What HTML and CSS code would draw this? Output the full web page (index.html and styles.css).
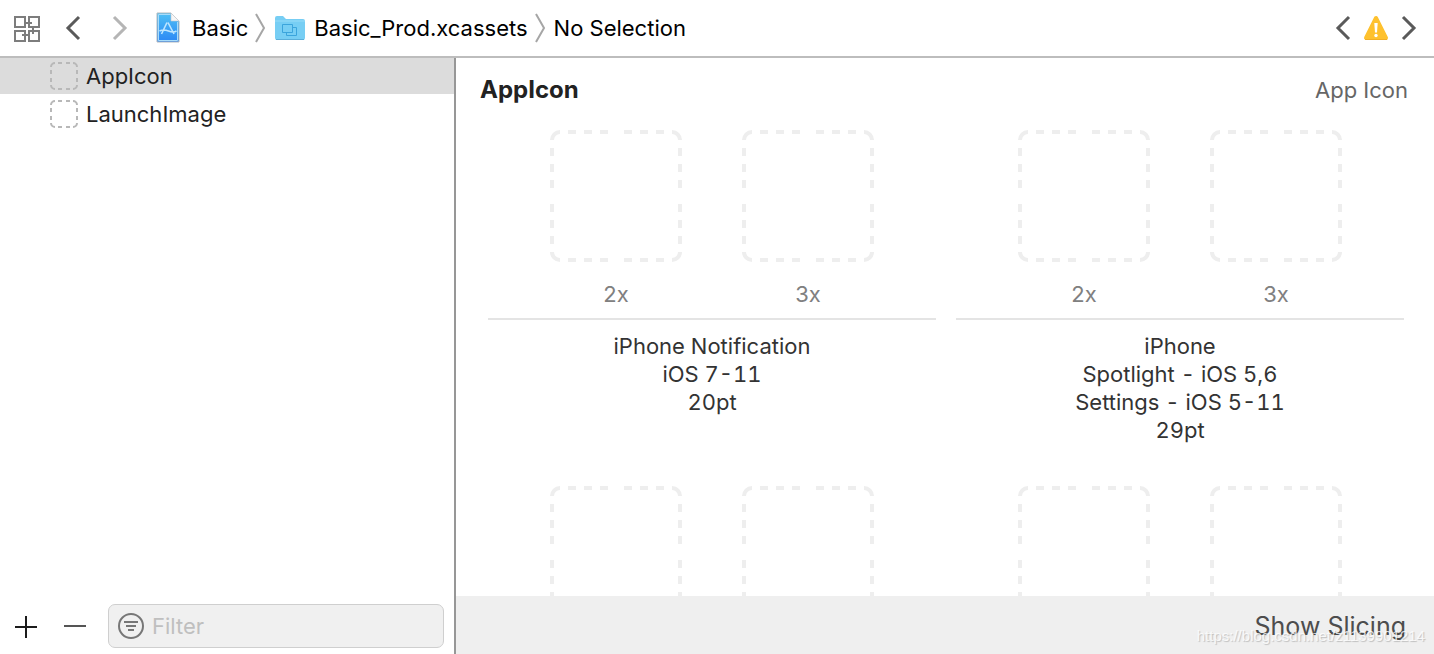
FILE: index.html
```html
<!DOCTYPE html>
<html lang="en">
<head>
<meta charset="utf-8">
<title>Basic_Prod.xcassets</title>
<link rel="stylesheet" href="styles.css">
</head>
<body>
<svg class="defs" aria-hidden="true">
  <symbol id="slot" viewBox="0 0 132 132">
    <g fill="none" stroke="currentColor" stroke-width="4">
      <path d="M10 2a8 8 0 0 0-8 8M122 2a8 8 0 0 1 8 8M10 130a8 8 0 0 1-8-8M122 130a8 8 0 0 0 8-8"/>
      <path d="M18 2h8m8 0h8m8 0h8m16 0h8m8 0h8m8 0h8M18 130h8m8 0h8m8 0h8m16 0h8m8 0h8m8 0h8"/>
      <path d="M2 18v8m0 8v8m0 8v8m0 16v8m0 8v8m0 8v8M130 18v8m0 8v8m0 8v8m0 16v8m0 8v8m0 8v8"/>
    </g>
  </symbol>
  <symbol id="mini" viewBox="0 0 28 28">
    <path fill="none" stroke="currentColor" stroke-width="2" d="M5 1a4 4 0 0 0-4 4M23 1a4 4 0 0 1 4 4M5 27a4 4 0 0 1-4-4M23 27a4 4 0 0 0 4-4M8 1h4m4 0h4M8 27h4m4 0h4M1 8v4m0 4v4M27 8v4m0 4v4"/>
  </symbol>
  <symbol id="sep" viewBox="0 0 12 30"><path fill="none" stroke="#a6a6a6" stroke-width="2" d="M1 1l8 14-8 14"/></symbol>
</svg>

<header class="jumpbar">
  <button class="icon-button related" aria-label="Related items">
    <svg width="28" height="28" viewBox="0 0 28 28" fill="none" stroke="#7d7d7d" stroke-width="2"><path d="M2 3h10v10H2zM16 3h10v10H16zM2 17h10v10H2zM16 17h10v10H16zM12 9h7M20 13v7M9 21h7"/></svg>
  </button>
  <button class="icon-button back" aria-label="Back">
    <svg width="16" height="26" viewBox="0 0 16 26" fill="none" stroke="#5a5a5a" stroke-width="3"><path d="M14 2L3 13l11 11"/></svg>
  </button>
  <button class="icon-button forward" aria-label="Forward">
    <svg width="16" height="26" viewBox="0 0 16 26" fill="none" stroke="#b5b5b5" stroke-width="3"><path d="M2 2l11 11L2 24"/></svg>
  </button>
  <nav class="path" aria-label="Path">
    <a class="crumb" href="#">
      <svg width="29" height="32" viewBox="0 0 29 32">
        <defs><linearGradient id="doc" x1="0" y1="0" x2="0" y2="1"><stop offset="0" stop-color="#4fc0f5"/><stop offset="1" stop-color="#2b87f5"/></linearGradient></defs>
        <path d="M2 1h14l8 8v21H2z" fill="url(#doc)" stroke="#b4b9bd"/>
        <path d="M15.500 2.500h-12v26h19V10" fill="none" stroke="#a7dcfa"/>
        <path d="M16 1v8h8z" fill="#f6f6f6" stroke="#c2c8cc" stroke-width=".6"/>
        <path d="M12 10.500L6.500 22M13 10.500l6 11.500M4.500 19q4-2 9 0t8 0" fill="none" stroke="#bfe6ff" stroke-width="1.600"/>
      </svg>
      <span>Basic</span>
    </a>
    <svg class="sep" width="12" height="30"><use href="#sep"/></svg>
    <a class="crumb" href="#">
      <svg width="32" height="28" viewBox="0 0 32 28">
        <path d="M1 4q0-2 2-2h6l3 3h17q2 0 2 2v17q0 2-2 2H3q-2 0-2-2z" fill="#77cef4"/>
        <path d="M1 7h30" stroke="#98dcf8"/><path d="M2 25.500h28" stroke="#5aaeda"/>
        <path d="M8.500 10.500h10v8h-10zM18.500 13.500h4v8h-10v-3" fill="none" stroke="#3ba4dc"/>
      </svg>
      <span>Basic_Prod.xcassets</span>
    </a>
    <svg class="sep" width="12" height="30"><use href="#sep"/></svg>
    <a class="crumb" href="#"><span>No Selection</span></a>
  </nav>
  <div class="issues">
    <button class="icon-button" aria-label="Previous issue">
      <svg width="16" height="26" viewBox="0 0 16 26" fill="none" stroke="#5a5a5a" stroke-width="3"><path d="M14 2L3 13l11 11"/></svg>
    </button>
    <button class="icon-button" aria-label="Warnings">
      <svg width="26" height="26" viewBox="0 0 26 26"><path d="M13 3L3 23h20z" fill="#fec12e" stroke="#fec12e" stroke-width="4" stroke-linejoin="round"/><path d="M2 24.500h22" stroke="#f2ae25"/><path d="M11.300 8h3.400l-.7 9.500h-2z" fill="#fff"/><circle cx="13" cy="20.500" r="1.700" fill="#fff"/></svg>
    </button>
    <button class="icon-button" aria-label="Next issue">
      <svg width="16" height="26" viewBox="0 0 16 26" fill="none" stroke="#5a5a5a" stroke-width="3"><path d="M2 2l11 11L2 24"/></svg>
    </button>
  </div>
</header>

<div class="workspace">
  <aside class="sidebar">
    <ul class="assets">
      <li><button class="asset selected"><svg width="28" height="28"><use href="#mini"/></svg>AppIcon</button></li>
      <li><button class="asset"><svg width="28" height="28"><use href="#mini"/></svg>LaunchImage</button></li>
    </ul>
    <div class="tools">
      <button class="icon-button" aria-label="Add"><svg width="22" height="24" viewBox="0 0 22 24" stroke="#1c1c1c" stroke-width="2"><path d="M0 13h22M11 2v22"/></svg></button>
      <button class="icon-button" aria-label="Remove"><svg width="22" height="24" viewBox="0 0 22 24" stroke="#555" stroke-width="2"><path d="M0 12h22"/></svg></button>
      <label class="filter">
        <svg width="26" height="26" viewBox="0 0 26 26" fill="none" stroke="#777" stroke-width="2"><circle cx="13" cy="13" r="12"/><path d="M6 9h14M8 13h10M10 17h6"/></svg>
        <input type="text" placeholder="Filter" aria-label="Filter">
      </label>
    </div>
  </aside>

  <main class="editor">
    <div class="canvas">
      <div class="heading"><h1>AppIcon</h1><span class="kind">App Icon</span></div>
      <div class="groups">
        <section class="group">
          <div class="slots">
            <figure><svg width="132" height="132"><use href="#slot"/></svg><figcaption>2x</figcaption></figure>
            <figure><svg width="132" height="132"><use href="#slot"/></svg><figcaption>3x</figcaption></figure>
          </div>
          <p class="caption">iPhone Notification<br>iOS 7-11<br>20pt</p>
        </section>
        <section class="group">
          <div class="slots">
            <figure><svg width="132" height="132"><use href="#slot"/></svg><figcaption>2x</figcaption></figure>
            <figure><svg width="132" height="132"><use href="#slot"/></svg><figcaption>3x</figcaption></figure>
          </div>
          <p class="caption">iPhone<br>Spotlight - iOS 5,6<br>Settings - iOS 5-11<br>29pt</p>
        </section>
        <section class="group">
          <div class="slots">
            <figure><svg width="132" height="132"><use href="#slot"/></svg></figure>
            <figure><svg width="132" height="132"><use href="#slot"/></svg></figure>
          </div>
        </section>
        <section class="group">
          <div class="slots">
            <figure><svg width="132" height="132"><use href="#slot"/></svg></figure>
            <figure><svg width="132" height="132"><use href="#slot"/></svg></figure>
          </div>
        </section>
      </div>
    </div>
    <footer class="footer">
      <button class="slicing">Show Slicing</button>
      <span class="watermark">https://blog.csdn.net/z1139901214</span>
    </footer>
  </main>
</div>
</body>
</html>
```
FILE: styles.css
```css
* { box-sizing: border-box; }

body {
  margin: 0;
  height: 100vh;
  display: flex;
  flex-direction: column;
  overflow: hidden;
  background: #fff;
  color: #222;
  font: 22px/28px Inter, "Liberation Sans", sans-serif;
}

button, input { font: inherit; color: inherit; }
svg { display: block; flex: none; }
.defs { position: absolute; width: 0; height: 0; }

.icon-button {
  display: flex;
  padding: 0;
  border: 0;
  background: none;
}

.jumpbar {
  display: flex;
  align-items: center;
  height: 58px;
  padding: 0 17px 0 13px;
  border-bottom: 2px solid #bdbdbd;
  flex: none;
}
.back { margin-left: 24px; }
.forward { margin-left: 31px; }

.path {
  display: flex;
  align-items: center;
  margin-left: 27px;
  flex: 1;
  white-space: nowrap;
}
.crumb {
  display: flex;
  align-items: center;
  gap: 8px;
  color: #000;
  text-decoration: none;
}
.sep { margin: 0 7px; }
.issues { display: flex; align-items: center; gap: 12px; }

.workspace { display: flex; flex: 1; min-height: 0; }

.sidebar {
  display: flex;
  flex-direction: column;
  width: 456px;
  flex: none;
  border-right: 2px solid #979797;
}
.assets {
  flex: 1;
  margin: 0;
  padding: 0;
  list-style: none;
  display: flex;
  flex-direction: column;
  gap: 2px;
}
.asset {
  display: flex;
  align-items: center;
  gap: 8px;
  width: 100%;
  height: 36px;
  padding: 0 50px;
  border: 0;
  background: none;
}
.asset svg { color: #b8b8b8; }
.selected { background: #dcdcdc; }

.tools {
  display: flex;
  align-items: center;
  gap: 27px;
  padding: 0 10px 6px 15px;
}
.filter {
  display: flex;
  align-items: center;
  gap: 8px;
  flex: 1;
  min-width: 0;
  height: 44px;
  margin-left: -5px;
  padding: 0 9px;
  border: 1px solid #cfcfcf;
  border-radius: 7px;
  background: #f0f0f0;
}
.filter input {
  flex: 1;
  width: 0;
  min-width: 0;
  padding: 0;
  border: 0;
  outline: 0;
  background: none;
}
.filter input::placeholder { color: #bfbfbf; opacity: 1; }

.editor { display: flex; flex-direction: column; flex: 1; min-width: 0; }
.canvas { flex: 1; min-height: 0; overflow: hidden; }

.heading {
  display: flex;
  justify-content: space-between;
  padding: 18px 26px 0 24px;
}
h1 { margin: 0; font-size: 24px; line-height: 28px; font-weight: 700; }
.kind { color: #666; }

.groups {
  display: grid;
  grid-template-columns: 1fr 1fr;
  gap: 42px 20px;
  padding: 26px 30px 0 32px;
}
.slots { display: flex; justify-content: center; gap: 60px; }
figure { margin: 0; color: #eee; }
figcaption { padding: 18px 0 10px; text-align: center; color: #808080; }
.caption {
  margin: 0;
  padding-top: 12px;
  border-top: 2px solid #e4e4e4;
  text-align: center;
  font-variant-numeric: tabular-nums;
  color: #333;
}

.footer {
  position: relative;
  display: flex;
  justify-content: flex-end;
  align-items: center;
  height: 58px;
  padding: 2px 28px 0;
  background: #efefef;
  flex: none;
}
.slicing { padding: 0; border: 0; background: none; color: #4d4d4d; font-size: 25px; }
.watermark {
  position: absolute;
  right: 9px;
  bottom: 8px;
  font: 15px/20px "Liberation Sans", sans-serif;
  color: #fffc;
  text-shadow: 1px 1px 1px #0003;
  pointer-events: none;
}
```
